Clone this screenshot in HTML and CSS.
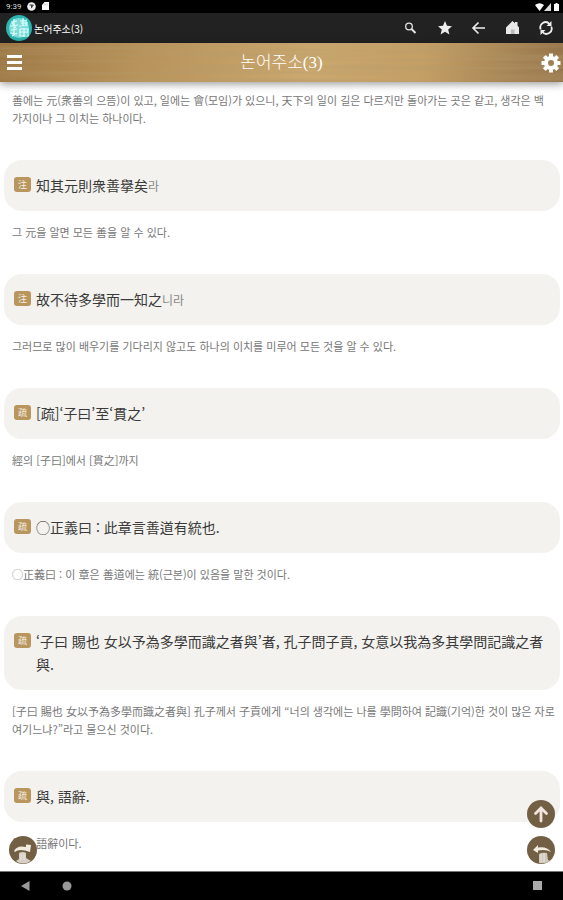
FILE: index.html
```html
<!DOCTYPE html>
<html lang="ko">

<head>
    <meta charset="UTF-8">
    <meta name="viewport" content="width=device-width, initial-scale=1.0">
    <title>논어주소(3)</title>
    <link rel="stylesheet" href="styles.css">
</head>

<body>
    <div class="status">
        <span class="time">9:39</span>
        <svg width="9" height="9" viewBox="0 0 9 9"><circle cx="4.5" cy="4.5" r="4.3" fill="#eee"/><path d="M2.5 3h3.8L4.2 6.2M4.5 3.2v2" stroke="#333" fill="none"/></svg>
        <svg width="7" height="9" viewBox="0 0 7 9"><path d="M2.5 0H7v8H0V3z" fill="#fff"/><path d="M3 1.5v2M5 1.5v2" stroke="#999" stroke-width=".6"/></svg>
        <div class="signals">
            <svg width="9" height="8" viewBox="0 0 9 8"><path d="M0 2Q4.5-1.500 9 2L4.5 8z" fill="#fff"/></svg>
            <svg width="7" height="8" viewBox="0 0 7 8"><path d="M7 0v8H0z" fill="#ddd"/></svg>
            <svg class="battery" width="5" height="8" viewBox="0 0 5 8"><path d="M1.5 0h2v1H5v7H0V1h1.5z" fill="#fff"/></svg>
        </div>
    </div>

    <header class="appbar">
        <svg class="logo" width="26" height="26" viewBox="0 0 26 26">
            <circle cx="13" cy="13" r="13" fill="#2bb5b0"/>
            <circle cx="13" cy="13" r="10" fill="#7fdcd8"/>
            <path d="M5 7l6-1M8 4v7M4 11l8-1M6 8l4 5M5 15l6-1M8 12v8M4 18l7 1M6 21l5-3M14 6l7-1M15 8h7M17 3v8M20 5v5M13 11l9-1M14 14h8v7h-8zM14 17h8M18 13v9" stroke="#dcfffc" stroke-width="1.2" fill="none"/>
        </svg>
        <span class="app-name">논어주소(3)</span>
        <nav class="tools">
            <button aria-label="검색"><svg width="16" height="16" viewBox="0 0 16 16" fill="none" stroke="#e5e5e5"><circle cx="7" cy="6.500" r="3.300" stroke-width="1.300"/><path d="M9.500 9l4 4" stroke-width="2"/></svg></button>
            <button aria-label="즐겨찾기"><svg width="16" height="16" viewBox="0 0 16 16"><path d="M9 1l2 4.800 5 .4-3.800 3.300L13.400 14.500 9 11.800l-4.400 2.700L5.800 9.500 2 6.200l5-.4z" fill="#eee"/></svg></button>
            <button aria-label="뒤로"><svg width="16" height="16" viewBox="0 0 16 16"><path d="M15 8H3.500M8.500 2.500L3 8l5.500 5.500" fill="none" stroke="#eee" stroke-width="1.600"/></svg></button>
            <button aria-label="홈"><svg width="16" height="16" viewBox="0 0 16 16"><path d="M8.500 1l2.500 2.300V2h2.500v3.500L15 7.500V14H2V7.500z" fill="#e8e8e8"/><path d="M7 14V9.500h3.500V14" fill="#bbb"/></svg></button>
            <button aria-label="새로고침"><svg width="16" height="16" viewBox="0 0 16 16" fill="none" stroke="#eee" stroke-width="1.800"><path d="M2.800 9.500A5.200 5.200 0 0 1 11.500 4M13.200 6.500A5.200 5.200 0 0 1 4.500 12"/><path d="M13.500 1v5h-5zM2.500 15v-5h5z" fill="#eee" stroke="none"/></svg></button>
        </nav>
    </header>

    <div class="titlebar">
        <svg class="grain" aria-hidden="true">
            <filter id="wood" x="0" y="0" width="100%" height="100%">
                <feTurbulence type="fractalNoise" baseFrequency="0.006 0.22" numOctaves="2" seed="9"/>
                <feColorMatrix values="0 0 0 0 0.450  0 0 0 0 0.320  0 0 0 0 0.150  0.900 0 0 0 -0.300"/>
            </filter>
            <rect width="100%" height="100%" filter="url(#wood)"/>
        </svg>
        <button aria-label="메뉴"><svg width="15" height="16" viewBox="0 0 15 16"><path d="M0 1.500h15M0 7.500h15M0 13.500h15" stroke="#fff" stroke-width="3"/></svg></button>
        <h1>논어주소(3)</h1>
        <button aria-label="설정"><svg width="20" height="20" viewBox="-10 -10 20 20">
            <circle r="5" fill="none" stroke="#fff" stroke-width="4"/>
            <path d="M0-9.500V-6M0 6v3.500M-9.500 0H-6M6 0h3.500M-6.700-6.700l2.500 2.500M4.200 4.200l2.500 2.500M-6.700 6.700l2.500-2.500M4.200-4.200l2.500-2.500" stroke="#fff" stroke-width="4"/>
        </svg></button>
    </div>

    <div class="viewer">
        <main>
            <p class="trans">善에는 元(衆善의 으뜸)이 있고, 일에는 會(모임)가 있으니, 天下의 일이 길은 다르지만 돌아가는 곳은 같고, 생각은 백 가지이나 그 이치는 하나이다.</p>

            <section>
                <div class="origin"><span class="mark">注</span><p>知其元則衆善擧矣<small>라</small></p></div>
                <p class="trans">그 元을 알면 모든 善을 알 수 있다.</p>
            </section>

            <section>
                <div class="origin"><span class="mark">注</span><p>故不待多學而一知之<small>니라</small></p></div>
                <p class="trans">그러므로 많이 배우기를 기다리지 않고도 하나의 이치를 미루어 모든 것을 알 수 있다.</p>
            </section>

            <section>
                <div class="origin"><span class="mark">疏</span><p>[疏]‘子曰’至‘貫之’</p></div>
                <p class="trans">經의 [子曰]에서 [貫之]까지</p>
            </section>

            <section>
                <div class="origin"><span class="mark">疏</span><p>◯正義曰 : 此章言善道有統也.</p></div>
                <p class="trans">◯正義曰 : 이 章은 善道에는 統(근본)이 있음을 말한 것이다.</p>
            </section>

            <section>
                <div class="origin"><span class="mark">疏</span><p>‘子曰 賜也 女以予為多學而識之者與’者, 孔子問子貢, 女意以我為多其學問記識之者與.</p></div>
                <p class="trans">[子曰 賜也 女以予為多學而識之者與] 孔子께서 子貢에게 “너의 생각에는 나를 學問하여 記識(기억)한 것이 많은 자로 여기느냐?”라고 물으신 것이다.</p>
            </section>

            <section>
                <div class="origin"><span class="mark">疏</span><p>與, 語辭.</p></div>
                <p class="trans">與는 語辭이다.</p>
            </section>
        </main>

        <button class="float next" aria-label="다음"><svg width="28" height="28" viewBox="0 0 28 28">
            <path d="M5 15Q8 9 17 11V8.500l5 .5-1 7-5-1.500Q9 13 6 16z" fill="#f2ebe0"/>
            <path d="M10 17q4-2 7 0v5l5 3q-4 2.500-8 2.500-4 0-7-2.500l3-2z" fill="#d6cfc6"/>
            <path d="M12 18v6M15 17.500V24" stroke="#ece5dc"/>
        </svg></button>
        <div class="float-right">
            <button class="float" aria-label="맨 위로"><svg width="28" height="28" viewBox="0 0 28 28"><path d="M14 21V8.500M8.500 13.500L14 8l5.500 5.500" fill="none" stroke="#f3e6df" stroke-width="2.800" stroke-linecap="round"/></svg></button>
            <button class="float" aria-label="이전"><svg width="28" height="28" viewBox="0 0 28 28">
                <path d="M6 14l5-5v2.500q9-1.500 13 4.500-5-3-13-1.500V17z" fill="#f2ebe0"/>
                <path d="M12 18q3-2 8-1l1 7 2 1q-4 3-11 2z" fill="#cfc8bd"/>
                <path d="M14 18v8M17 17v9" stroke="#ece5dc"/>
            </svg></button>
        </div>
    </div>

    <footer class="sysnav">
        <button aria-label="뒤로 가기"><svg width="10" height="10" viewBox="0 0 10 10"><path d="M9.500 0v10L1 5z" fill="#999"/></svg></button>
        <button aria-label="홈 화면"><svg width="10" height="10" viewBox="0 0 10 10"><circle cx="5" cy="5" r="4.500" fill="#999"/></svg></button>
        <button class="recent" aria-label="최근 앱"><svg width="10" height="10" viewBox="0 0 10 10"><path d="M0 0h9v9H0z" fill="#aaa"/></svg></button>
    </footer>
</body>

</html>
```
FILE: styles.css
```css
* {
    box-sizing: border-box;
}

body {
    margin: 0;
    height: 100vh;
    display: flex;
    flex-direction: column;
    background: #fff;
    font-family: "Noto Sans CJK KR", sans-serif;
}

p, h1 {
    margin: 0;
}

button {
    display: flex;
    padding: 0;
    border: 0;
    background: none;
}

svg {
    display: block;
}

/* status bar */
.status {
    flex: none;
    display: flex;
    align-items: center;
    gap: 6px;
    height: 13px;
    padding: 0 4px 0 6px;
    background: #000;
    color: #ddd;
}

.time {
    font: 8px/13px Roboto, sans-serif;
}

.signals {
    display: flex;
    margin-left: auto;
}

.battery {
    margin-left: 3px;
}

.appbar {
    flex: none;
    display: flex;
    align-items: center;
    height: 30px;
    padding: 0 9px 0 6px;
    background: #222;
}

.app-name {
    margin-left: 2px;
    color: #fff;
    font-size: 10px;
}

.tools {
    display: flex;
    gap: 18px;
    margin-left: auto;
}

/* wooden title bar */
.titlebar {
    flex: none;
    position: relative;
    z-index: 1;
    display: flex;
    align-items: center;
    justify-content: space-between;
    height: 39px;
    padding: 0 2px 0 7px;
    background: linear-gradient(100deg, #9c7744, #b8935a 25%, #cba86e 55%, #c49f65 75%, #94734a);
    box-shadow: 0 2px 8px rgba(0, 0, 0, .4);
}

.titlebar > * {
    position: relative;
}

.titlebar .grain {
    position: absolute;
    top: 0;
    left: 0;
    width: 100%;
    height: 100%;
}

.titlebar h1 {
    color: #fff;
    font-family: "Liberation Serif", "Noto Sans CJK KR", serif;
    font-size: 17px;
    font-weight: 300;
    line-height: 24px;
}

/* text */
.viewer {
    flex: 1;
    min-height: 0;
    position: relative;
}

main {
    height: 100%;
    padding: 9px 3px 0 4px;
    overflow-y: auto;
    scrollbar-width: none;
}

.trans {
    padding: 0 2px 0 8px;
    color: #777;
    font-size: 11px;
    line-height: 18px;
    word-break: keep-all;
}

section {
    margin-top: 33px;
}

.origin {
    display: flex;
    align-items: flex-start;
    gap: 5px;
    margin-bottom: 12px;
    padding: 14px 7px 14px 10px;
    border-radius: 18px;
    background: #f3f2ee;
    color: #3a3a3a;
    font-size: 14px;
    line-height: 23px;
}

.origin small {
    color: #888;
    font-size: 12px;
}

.mark {
    flex: none;
    width: 17px;
    height: 15px;
    margin-top: 3px;
    border-radius: 3px;
    background: #b8965e;
    color: #f5efe4;
    font-size: 9px;
    line-height: 15px;
    text-align: center;
}

/* floating buttons */
.float {
    border-radius: 50%;
    background: #736044;
}

.next {
    position: absolute;
    left: 9px;
    bottom: 7px;
}

.float-right {
    position: absolute;
    right: 8px;
    bottom: 7px;
    display: grid;
    gap: 8px;
}

.sysnav {
    flex: none;
    display: flex;
    align-items: center;
    gap: 32px;
    height: 29px;
    padding: 0 20px;
    border-top: 1px solid #777;
    background: #000;
}

.recent {
    margin-left: auto;
}
```
